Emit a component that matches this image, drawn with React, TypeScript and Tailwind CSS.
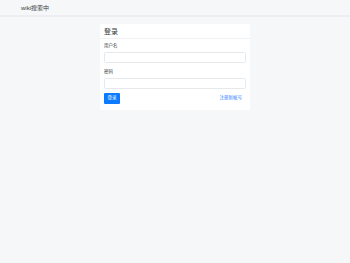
export default function App() {
  return (
    <div className="min-h-screen bg-[#f6f7f9] font-['Liberation_Sans','Noto_Sans_CJK_SC',sans-serif] text-[#343a40]">
      {/* top bar */}
      <div className="h-[17px] border-b-2 border-[#eceef1] flex items-center pl-[21px]">
        <span className="text-[6px] leading-none">wiki搜索中</span>
      </div>

      <div className="flex justify-center pt-[7px]">
        <div className="w-[150px] bg-white rounded-[1px]">
          <div className="h-[15px] border-b border-[#f0f1f3] flex items-center px-[4px]">
            <h4 className="text-[7px] leading-none">登录</h4>
          </div>
          <form className="px-[4px] pt-[4px] pb-[6px]">
            <label className="block text-[4.5px] leading-[6px]">用户名</label>
            <input className="mt-[3px] block w-full h-[11px] border border-[#e6e8eb] rounded-[1.5px] bg-white" />
            <label className="block mt-[6px] text-[4.5px] leading-[6px]">密码</label>
            <input type="password" className="mt-[3px] block w-full h-[11px] border border-[#e6e8eb] rounded-[1.5px] bg-white" />
            <div className="mt-[4px] flex items-center justify-between">
              <button type="button" className="h-[11px] w-[16px] bg-[#0d7bff] text-white text-[4.5px] leading-none rounded-[1px] flex items-center justify-center">
                登录
              </button>
              <a className="text-[4.5px] leading-none text-[#2f80ff] mr-[4px]">注册新帐号</a>
            </div>
          </form>
        </div>
      </div>
    </div>
  )
}
